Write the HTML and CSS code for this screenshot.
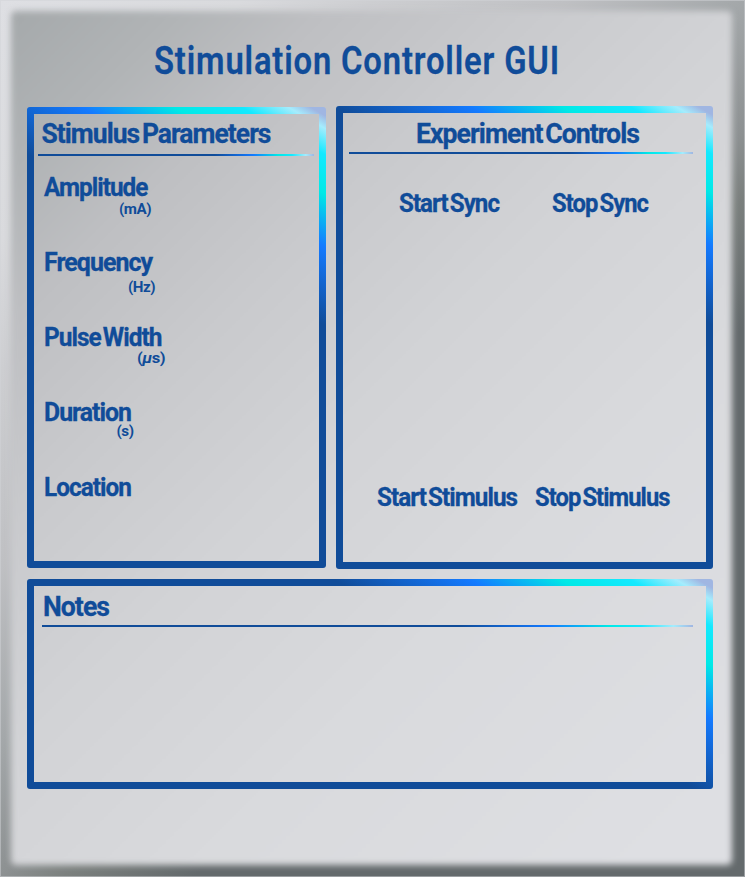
FILE: index.html
```html
<!DOCTYPE html>
<html lang="en">
<head>
<meta charset="utf-8">
<title>Stimulation Controller GUI</title>
<link rel="stylesheet" href="styles.css">
</head>
<body>
<main class="console">
  <h1 class="title"><svg width="406" height="40"><text x="0" y="34" textLength="406" lengthAdjust="spacingAndGlyphs">Stimulation Controller GUI</text></svg></h1>
  <div class="top">
    <section class="panel parameters">
      <h2><svg width="229" height="24"><text x="-0.5" y="22" textLength="229" lengthAdjust="spacingAndGlyphs">Stimulus Parameters</text></svg></h2>
      <div class="rule"></div>
      <div class="fields">
        <div class="field">
          <svg width="104" height="24"><text x="0" y="20" textLength="103.5" lengthAdjust="spacingAndGlyphs">Amplitude</text></svg>
          <svg class="unit" width="110" height="24"><text x="75" y="13.5" textLength="32" lengthAdjust="spacingAndGlyphs">(mA)</text></svg>
        </div>
        <div class="field">
          <svg width="108" height="24"><text x="0" y="20" textLength="108" lengthAdjust="spacingAndGlyphs">Frequency</text></svg>
          <svg class="unit" width="112" height="24"><text x="84" y="17" textLength="27" lengthAdjust="spacingAndGlyphs">(Hz)</text></svg>
        </div>
        <div class="field">
          <svg width="118" height="24"><text x="0" y="20" textLength="117.5" lengthAdjust="spacingAndGlyphs">Pulse Width</text></svg>
          <svg class="unit" width="124" height="24"><text x="93" y="13" textLength="28" lengthAdjust="spacingAndGlyphs">(<tspan class="mu">µ</tspan>s)</text></svg>
        </div>
        <div class="field">
          <svg width="87" height="24"><text x="0" y="20" textLength="87" lengthAdjust="spacingAndGlyphs">Duration</text></svg>
          <svg class="unit" width="92" height="24"><text x="72.5" y="11" textLength="17" lengthAdjust="spacingAndGlyphs">(s)</text></svg>
        </div>
        <div class="field">
          <svg width="87" height="24"><text x="0" y="20" textLength="87" lengthAdjust="spacingAndGlyphs">Location</text></svg>
        </div>
      </div>
    </section>
    <section class="panel controls">
      <h2><svg width="223" height="24"><text x="0" y="22" textLength="223" lengthAdjust="spacingAndGlyphs">Experiment Controls</text></svg></h2>
      <div class="rule"></div>
      <div class="pair sync">
        <svg width="100" height="24"><text x="0" y="20" textLength="100" lengthAdjust="spacingAndGlyphs">Start Sync</text></svg>
        <svg width="96" height="24"><text x="0" y="20" textLength="96" lengthAdjust="spacingAndGlyphs">Stop Sync</text></svg>
      </div>
      <div class="pair stimulus">
        <svg width="140" height="24"><text x="0" y="20" textLength="140" lengthAdjust="spacingAndGlyphs">Start Stimulus</text></svg>
        <svg width="135" height="24"><text x="0" y="20" textLength="134.5" lengthAdjust="spacingAndGlyphs">Stop Stimulus</text></svg>
      </div>
    </section>
  </div>
  <section class="panel notes">
    <h2><svg width="66" height="24"><text x="0" y="22" textLength="66" lengthAdjust="spacingAndGlyphs">Notes</text></svg></h2>
    <div class="rule"></div>
  </section>
</main>
</body>
</html>
```
FILE: styles.css
```css
* { box-sizing: border-box; }

body {
  margin: 0;
  font-family: Roboto, "Liberation Sans", sans-serif;
  font-weight: 700;
}

.console {
  position: relative;
  width: 745px;
  height: 877px;
  padding: 40px 32px 0 27px;
  overflow: hidden;
  isolation: isolate;
  background: linear-gradient(135deg, #dedfe3 0, #d9dadd 15%, #cdced1 23%, #bfc0c3 35%, #a3a7a9 46%, #8d9192 54%, #7b807e 58%, #646a6c 66%);
  box-shadow: inset 0 0 0 1px rgba(210, 212, 215, .5);
}

/* brushed face plate with a soft edge */
.console::before {
  content: "";
  position: absolute;
  z-index: -1;
  inset: 11px 13px 12px 11px;
  border-radius: 5px;
  background: linear-gradient(135deg, #a5a9ab 0, #b1b4b6 120px, #bebfc2 220px, #c9cacd 370px, #d2d3d6 530px, #d9dadd 740px, #dedfe3 1050px);
  filter: blur(3px);
}

svg { display: block; overflow: visible; }
text { fill: #104c99; font-size: 25px; word-spacing: -3px; letter-spacing: -1px; stroke: #104c99; stroke-width: .3px; }
h1, h2 { margin: 0; }
h1 text { font-size: 38.5px; font-weight: 600; word-spacing: 0; letter-spacing: 1px; }
h2 text { font-size: 27.5px; }
.unit text { font-size: 15.5px; letter-spacing: -.5px; stroke: none; }
.unit .mu { font-style: italic; }

.title { height: 66px; padding-left: 127px; }
.top { display: flex; gap: 10px; height: 463px; }

.panel {
  border: 7px solid;
  border-image: linear-gradient(210deg, #a0b6e2 8px, #a5ecfd 19px, #14e9ff 42px, #00e9e6 76px, #147aff 122px, #104c99 190px) 7;
  clip-path: inset(0 round 3px);
}

.rule {
  height: 2px;
  background: linear-gradient(90deg, #104c99 64%, #147aff 78%, #00e9e6 87%, #14e9ff 92%, #a5ecfd 97%, #a0b6e2 100%);
}

.parameters { width: 299px; height: 461px; margin-top: 1px; padding: 7px 0 0 4px; }
.parameters h2 { padding-left: 4px; }
.parameters .rule { width: 276px; margin-top: 9px; }
.fields { display: grid; grid-auto-rows: 75px; margin-top: 20px; padding-left: 6px; }

.controls { width: 377px; padding: 8px 0 0 6px; }
.controls h2 { padding-left: 67px; }
.controls .rule { width: 344px; margin-top: 7px; }
.pair { display: flex; }
.sync { margin-top: 38px; padding-left: 50px; gap: 53px; }
.stimulus { margin-top: 270px; padding-left: 28px; gap: 18px; }

.notes { width: 686px; height: 210px; margin-top: 10px; padding: 8px 0 0 8px; }
.notes h2 { padding-left: 1px; }
.notes .rule { width: 651px; margin-top: 7px; }
```
